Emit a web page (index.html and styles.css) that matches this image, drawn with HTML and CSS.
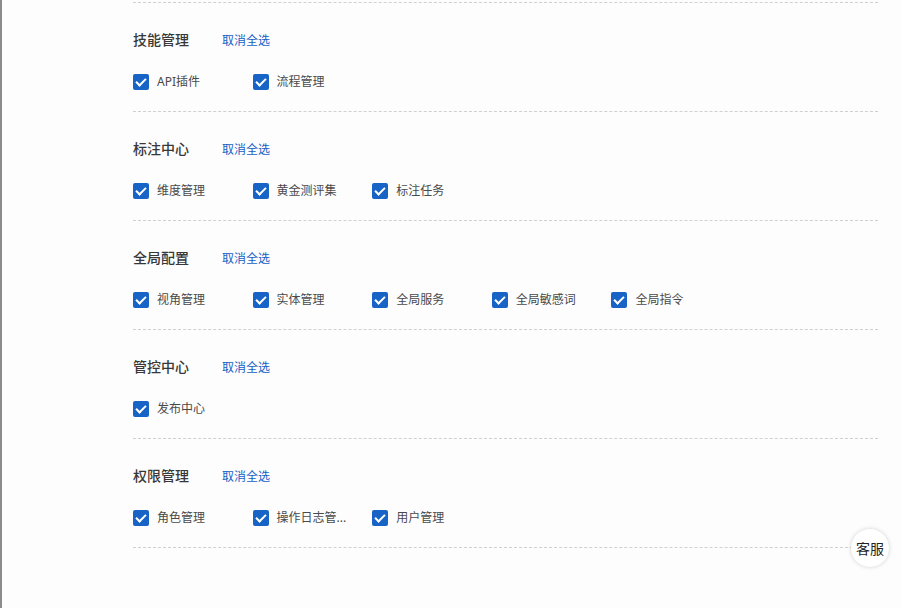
FILE: index.html
```html
<!DOCTYPE html>
<html lang="zh-CN">
<head>
  <meta charset="UTF-8" />
  <meta name="viewport" content="width=device-width, initial-scale=1.0"/>
  <title>权限配置</title>
  <link rel="stylesheet" href="styles.css">
</head>
<body>
  <div class="page">
    <div class="perm-list">
      <div class="perm-head"></div>

      <div class="perm-group">
        <div class="group-title">
          <span class="group-name">技能管理</span>
          <a class="toggle-all">取消全选</a>
        </div>
        <div class="options">
          <label class="option"><span class="check"></span><span class="opt-text">API插件</span></label>
          <label class="option"><span class="check"></span><span class="opt-text">流程管理</span></label>
        </div>
      </div>

      <div class="perm-group">
        <div class="group-title">
          <span class="group-name">标注中心</span>
          <a class="toggle-all">取消全选</a>
        </div>
        <div class="options">
          <label class="option"><span class="check"></span><span class="opt-text">维度管理</span></label>
          <label class="option"><span class="check"></span><span class="opt-text">黄金测评集</span></label>
          <label class="option"><span class="check"></span><span class="opt-text">标注任务</span></label>
        </div>
      </div>

      <div class="perm-group">
        <div class="group-title">
          <span class="group-name">全局配置</span>
          <a class="toggle-all">取消全选</a>
        </div>
        <div class="options">
          <label class="option"><span class="check"></span><span class="opt-text">视角管理</span></label>
          <label class="option"><span class="check"></span><span class="opt-text">实体管理</span></label>
          <label class="option"><span class="check"></span><span class="opt-text">全局服务</span></label>
          <label class="option"><span class="check"></span><span class="opt-text">全局敏感词</span></label>
          <label class="option"><span class="check"></span><span class="opt-text">全局指令</span></label>
        </div>
      </div>

      <div class="perm-group">
        <div class="group-title">
          <span class="group-name">管控中心</span>
          <a class="toggle-all">取消全选</a>
        </div>
        <div class="options">
          <label class="option"><span class="check"></span><span class="opt-text">发布中心</span></label>
        </div>
      </div>

      <div class="perm-group">
        <div class="group-title">
          <span class="group-name">权限管理</span>
          <a class="toggle-all">取消全选</a>
        </div>
        <div class="options">
          <label class="option"><span class="check"></span><span class="opt-text">角色管理</span></label>
          <label class="option"><span class="check"></span><span class="opt-text" title="操作日志管理">操作日志管...</span></label>
          <label class="option"><span class="check"></span><span class="opt-text">用户管理</span></label>
        </div>
      </div>
    </div>

    <div class="service-btn">客服</div>
  </div>
</body>
</html>
```

FILE: styles.css
```css
html, body {
  margin: 0;
  height: 100%;
}
body {
  font-family: "Noto Sans", "Noto Sans CJK SC", sans-serif;
  background-color: #fdfdfd;
  border-left: 2px solid #8c8c8c;
  box-sizing: border-box;
  overflow: hidden;
}
.page {
  position: relative;
  height: 100%;
  padding-left: 131px;
}
.perm-list {
  width: 745px;
}
.perm-head {
  height: 2px;
  border-bottom: 1px dashed #d0d0d0;
}
.perm-group {
  padding: 26px 0 21px;
  border-bottom: 1px dashed #d0d0d0;
}
.group-title {
  display: flex;
  align-items: center;
  height: 20px;
  margin-bottom: 25px;
}
.group-name {
  width: 89px;
  font-size: 14px;
  font-weight: 500;
  color: #383838;
}
.toggle-all {
  font-size: 12px;
  line-height: 20px;
  padding-top: 3px;
  color: #1560c4;
  cursor: pointer;
}
.options {
  display: flex;
  height: 16px;
}
.option {
  display: flex;
  align-items: center;
  width: 119.6px;
  font-size: 12px;
  color: #4a4a4a;
}
.check {
  position: relative;
  width: 16px;
  height: 16px;
  border-radius: 2px;
  background-color: #1764c6;
  margin-right: 8px;
  flex-shrink: 0;
}
.check::after {
  content: "";
  position: absolute;
  left: 5px;
  top: 2px;
  width: 4px;
  height: 8px;
  border: solid #fff;
  border-width: 0 2px 2px 0;
  transform: rotate(45deg);
}
.opt-text {
  white-space: nowrap;
  line-height: 16px;
}
.service-btn {
  position: absolute;
  left: 849px;
  top: 529px;
  width: 38px;
  height: 38px;
  border-radius: 50%;
  background: #fff;
  box-shadow: 0 0 4px rgba(0, 0, 0, 0.18);
  display: flex;
  align-items: center;
  justify-content: center;
  font-size: 14px;
  color: #222;
}
```
